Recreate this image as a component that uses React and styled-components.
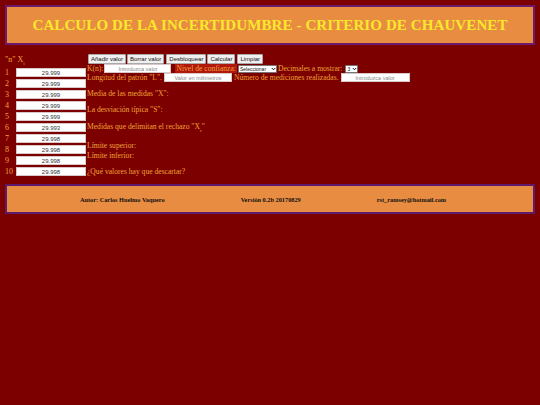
import React from "react";
import styled, { createGlobalStyle } from "styled-components";

const Global = createGlobalStyle`
  html, body { margin: 0; padding: 0; background: #7d0000; }
  body { font-family: "Liberation Serif", "Times New Roman", serif; }
`;

const Page = styled.div`
  padding: 5px 5px 0 5px;
  min-height: 400px;
  background: #7d0000;
`;

const Banner = styled.header`
  height: 36px;
  background: #e88c42;
  border: 2px solid #6c1a6e;
  display: flex;
  align-items: center;
  justify-content: center;
`;

const Title = styled.h1`
  margin: 0;
  font-family: "Liberation Serif", serif;
  font-weight: bold;
  font-size: 15px;
  color: #f9e82a;
  letter-spacing: 0.1px;
`;

const Main = styled.main`
  display: flex;
  margin-top: 9px;
`;

const DataColumn = styled.div`
  width: 82px;
  display: flex;
  flex-direction: column;
  padding-top: 1px;
`;

const ColHeader = styled.div`
  font-size: 8px;
  color: #f0a436;
  height: 10px;
  line-height: 10px;
  margin-bottom: 2px;
`;

const DataRow = styled.div`
  display: flex;
  align-items: center;
  height: 11px;
`;

const RowNum = styled.span`
  width: 11px;
  font-size: 8px;
  color: #f0a436;
`;

const ValueInput = styled.input`
  box-sizing: border-box;
  width: 70px;
  height: 9px;
  padding: 0;
  border: 1px solid #d9c6c6;
  background: #fff;
  font-family: "Liberation Sans", Arial, sans-serif;
  font-size: 6px;
  color: #333;
  text-align: center;
  outline: none;
`;

const Panel = styled.div`
  flex: 1;
  display: flex;
  flex-direction: column;
  font-size: 7.6px;
  color: #f0a436;
`;

const Toolbar = styled.div`
  display: flex;
  gap: 1px;
  padding-left: 1px;
`;

const Btn = styled.button`
  box-sizing: border-box;
  height: 10px;
  padding: 0 2px;
  margin: 0 0 0 ${(p) => (p.$gap ? "1px" : "0")};
  border: 1px solid #a9a9a9;
  border-radius: 1px;
  background: #efefef;
  font-family: "Liberation Sans", Arial, sans-serif;
  font-size: 6px;
  color: #111;
  line-height: 8px;
`;

const Line = styled.div`
  display: flex;
  align-items: center;
  height: 9px;
  white-space: nowrap;
  margin-top: ${(p) => p.$mt || 0}px;
`;

const Text = styled.span`
  font-size: 7.6px;
  color: #f0a436;
`;

const Highlight = styled.span`
  font-size: 7.6px;
  color: #f0a436;
  background: #b0170d;
  padding: 0 1px;
  margin: 0 0 0 3px;
`;

const FieldInput = styled.input`
  box-sizing: border-box;
  width: ${(p) => p.$w}px;
  height: 9px;
  padding: 0;
  margin: 0 ${(p) => p.$mr || 1}px 0 ${(p) => p.$ml || 1}px;
  border: 1px solid #d9c6c6;
  background: #fff;
  font-family: "Liberation Sans", Arial, sans-serif;
  font-size: 5.5px;
  text-align: center;
  outline: none;
  &::placeholder { color: #888; }
`;

const SelectWrap = styled.span`
  position: relative;
  display: inline-flex;
  margin: 0 ${(p) => p.$mr || 1}px 0 ${(p) => p.$ml || 1}px;
`;

const Select = styled.select`
  appearance: none;
  -webkit-appearance: none;
  box-sizing: border-box;
  height: 8px;
  width: ${(p) => p.$w}px;
  padding: 0 0 0 1px;
  border: 1px solid #767676;
  border-radius: 1px;
  background: #fff;
  font-family: "Liberation Sans", Arial, sans-serif;
  font-size: 5px;
  line-height: 6px;
  color: #111;
  outline: none;
`;

const Chevron = styled.svg`
  position: absolute;
  right: 1px;
  top: 2px;
  width: 5px;
  height: 4px;
  pointer-events: none;
`;

const Para = styled.div`
  font-size: 7.6px;
  line-height: 10px;
  color: #f0a436;
  margin-top: ${(p) => p.$mt || 0}px;
`;

const Footer = styled.footer`
  margin-top: 7px;
  height: 26px;
  background: #e88c42;
  border: 2px solid #5e1a6e;
  display: flex;
  align-items: center;
  justify-content: center;
  gap: 76px;
  padding-right: 14px;
`;

const Credit = styled.span`
  font-family: "Liberation Serif", serif;
  font-weight: bold;
  font-size: 6.3px;
  color: #111;
`;

const Sub = styled.sub`
  font-size: 5px;
`;

const values = ["29.999", "29.999", "29.999", "29.999", "29.999", "29.993", "29.998", "29.998", "29.998", "29.998"];

function Dropdown({ w, ml, mr, value, label }) {
  return (
    <SelectWrap $ml={ml} $mr={mr}>
      <Select $w={w} defaultValue={value}>
        <option value={value}>{label}</option>
      </Select>
      <Chevron viewBox="0 0 10 8">
        <path d="M1.5 2 L5 5.5 L8.5 2" fill="none" stroke="#111" strokeWidth="2" />
      </Chevron>
    </SelectWrap>
  );
}

export default function App() {
  return (
    <>
      <Global />
      <Page>
        <Banner>
          <Title>CALCULO DE LA INCERTIDUMBRE - CRITERIO DE CHAUVENET</Title>
        </Banner>
        <Main>
          <DataColumn>
            <ColHeader>"n" X<Sub>i</Sub></ColHeader>
            {values.map((v, i) => (
              <DataRow key={i}>
                <RowNum>{i + 1}</RowNum>
                <ValueInput defaultValue={v} />
              </DataRow>
            ))}
          </DataColumn>
          <Panel>
            <Toolbar>
              <Btn>Añadir valor</Btn>
              <Btn>Borrar valor</Btn>
              <Btn $gap>Desbloquear</Btn>
              <Btn>Calcular</Btn>
              <Btn $gap>Limpiar</Btn>
            </Toolbar>
            <Line $mt={0}>
              <Text>K(n):</Text>
              <FieldInput $w={67} placeholder="Introduzca valor" />
              <Highlight>Nivel de confianza:</Highlight>
              <Dropdown w={39} value="s" label="Seleccionar" />
              <Text>Decimales a mostrar:</Text>
              <Dropdown w={13} ml={3} value="3" label="3" />
            </Line>
            <Line>
              <Text>Longitud del patrón "L".</Text>
              <FieldInput $w={68} $ml={2} $mr={2} placeholder="Valor en milímetros" />
              <Text>Número de mediciones realizadas.</Text>
              <FieldInput $w={69} $ml={2} placeholder="Introduzca valor" />
            </Line>
            <Para $mt={7}>Media de las medidas "X":</Para>
            <Para $mt={6}>La desviación típica "S":</Para>
            <Para $mt={7}>
              Medidas que delimitan el rechazo "X<Sub>r</Sub>"
            </Para>
            <Para $mt={5}>Límite superior:</Para>
            <Para>Límite inferior:</Para>
            <Para $mt={6}>¿Qué valores hay que descartar?</Para>
          </Panel>
        </Main>
        <Footer>
          <Credit>Autor: Carlos Huelmo Vaquero</Credit>
          <Credit>Versión 0.2b 20170829</Credit>
          <Credit>rst_ramsey@hotmail.com</Credit>
        </Footer>
      </Page>
    </>
  );
}
